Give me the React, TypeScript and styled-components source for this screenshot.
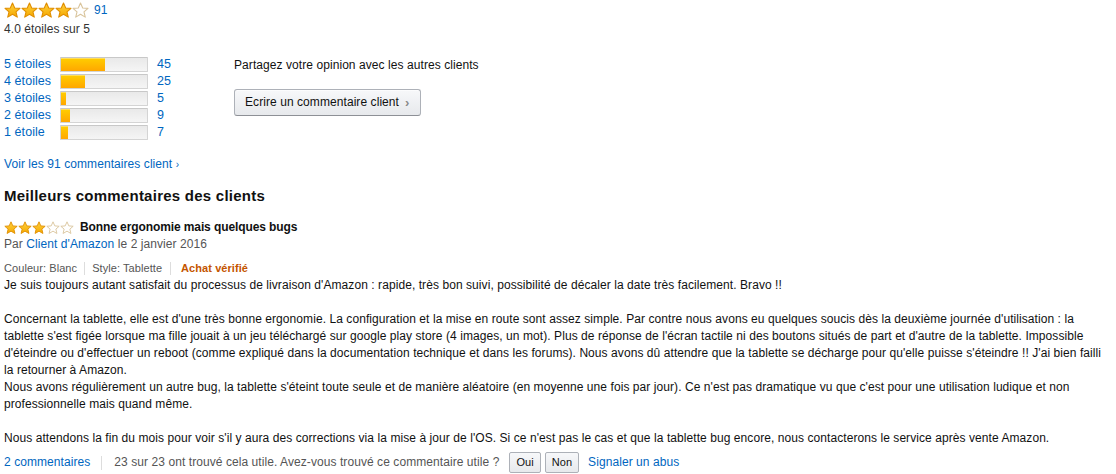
import styled, { createGlobalStyle } from "styled-components";

const GlobalStyle = createGlobalStyle`
  html, body {
    margin: 0;
    padding: 0;
    background: #fff;
  }
  body {
    font-family: "Liberation Sans", Arial, sans-serif;
    font-size: 12px;
    letter-spacing: 0.07px;
    color: #111;
  }
`;

const histogram = [
  { label: "5 étoiles", count: 45 },
  { label: "4 étoiles", count: 25 },
  { label: "3 étoiles", count: 5 },
  { label: "2 étoiles", count: 9 },
  { label: "1 étoile", count: 7 },
];
const total = 91;

const Star = ({ filled, size }: { filled: boolean; size: number }) => (
  <svg width={size} height={size} viewBox="0 0 20 20">
    <defs>
      <linearGradient id="starGold" x1="0" y1="0" x2="0" y2="1">
        <stop offset="0%" stopColor="#ffd23f" />
        <stop offset="100%" stopColor="#f5a800" />
      </linearGradient>
    </defs>
    <path
      d="M10 1.2 L12.6 7 L18.8 7.5 L14.1 11.6 L15.6 17.8 L10 14.5 L4.4 17.8 L5.9 11.6 L1.2 7.5 L7.4 7 Z"
      fill={filled ? "url(#starGold)" : "#fff"}
      stroke={filled ? "#e08e00" : "#d9c49c"}
      strokeWidth="1.3"
      strokeLinejoin="round"
    />
  </svg>
);

const Stars = ({ value, size }: { value: number; size: number }) => (
  <StarRow>
    {[1, 2, 3, 4, 5].map((i) => (
      <Star key={i} filled={i <= value} size={size} />
    ))}
  </StarRow>
);

const App = () => {
  return (
    <>
      <GlobalStyle />
      <Page>
        <Summary>
          <Stars value={4} size={17} />
          <Link>91</Link>
        </Summary>
        <AverageText>4.0 étoiles sur 5</AverageText>

        <RatingArea>
          <Histogram>
            {histogram.map((row) => (
              <HistRow key={row.label}>
                <Link>{row.label}</Link>
                <Bar>
                  <BarFill style={{ width: `${Math.round((row.count / total) * 88)}px` }} />
                </Bar>
                <Link>{row.count}</Link>
              </HistRow>
            ))}
          </Histogram>
          <WriteBox>
            <div>Partagez votre opinion avec les autres clients</div>
            <WriteButton>
              <span>Ecrire un commentaire client</span>
              <Chevron>›</Chevron>
            </WriteButton>
          </WriteBox>
        </RatingArea>

        <SeeAll>
          Voir les 91 commentaires client <SmallChevron>›</SmallChevron>
        </SeeAll>

        <SectionTitle>Meilleurs commentaires des clients</SectionTitle>

        <Review>
          <ReviewHeader>
            <Stars value={3} size={14} />
            <ReviewTitle>Bonne ergonomie mais quelques bugs</ReviewTitle>
          </ReviewHeader>
          <Byline>
            Par <Link>Client d'Amazon</Link> le 2 janvier 2016
          </Byline>
          <Meta>
            <MetaItem>Couleur: Blanc</MetaItem>
            <MetaItem>Style: Tablette</MetaItem>
            <Verified>Achat vérifié</Verified>
          </Meta>
          <Body>
            <p>
              Je suis toujours autant satisfait du processus de livraison d'Amazon : rapide, très bon suivi, possibilité
              de décaler la date très facilement. Bravo !!
            </p>
            <p>
              Concernant la tablette, elle est d'une très bonne ergonomie. La configuration et la mise en route sont assez
              simple. Par contre nous avons eu quelques soucis dès la deuxième journée d'utilisation : la tablette s'est
              figée lorsque ma fille jouait à un jeu téléchargé sur google play store (4 images, un mot). Plus de réponse
              de l'écran tactile ni des boutons situés de part et d'autre de la tablette. Impossible d'éteindre ou
              d'effectuer un reboot (comme expliqué dans la documentation technique et dans les forums). Nous avons dû
              attendre que la tablette se décharge pour qu'elle puisse s'éteindre !! J'ai bien failli la retourner à
              Amazon.
              <br />
              Nous avons régulièrement un autre bug, la tablette s'éteint toute seule et de manière aléatoire (en moyenne
              une fois par jour). Ce n'est pas dramatique vu que c'est pour une utilisation ludique et non
              professionnelle mais quand même.
            </p>
            <p>
              Nous attendons la fin du mois pour voir s'il y aura des corrections via la mise à jour de l'OS. Si ce n'est
              pas le cas et que la tablette bug encore, nous contacterons le service après vente Amazon.
            </p>
          </Body>
          <Footer>
            <Link>2 commentaires</Link>
            <Divider />
            <Helpful>23 sur 23 ont trouvé cela utile. Avez-vous trouvé ce commentaire utile ?</Helpful>
            <VoteButtons>
              <VoteButton>Oui</VoteButton>
              <VoteButton>Non</VoteButton>
            </VoteButtons>
            <Link>Signaler un abus</Link>
          </Footer>
        </Review>
      </Page>
    </>
  );
};

const Page = styled.div`
  padding: 2px 12px 0 4px;
  line-height: 17px;
`;
const StarRow = styled.span`
  display: inline-flex;
  align-items: center;
  svg {
    display: block;
  }
`;
const Summary = styled.div`
  display: flex;
  align-items: center;
  gap: 5px;
  height: 16px;
`;
const Link = styled.span`
  color: #0066c0;
`;
const AverageText = styled.div`
  margin-top: 3px;
  color: #333;
`;
const RatingArea = styled.div`
  display: flex;
  margin-top: 18px;
`;
const Histogram = styled.div`
  display: flex;
  flex-direction: column;
  width: 230px;
`;
const HistRow = styled.div`
  display: grid;
  grid-template-columns: 52px 88px auto;
  column-gap: 4px;
  align-items: center;
  height: 17px;
  font-size: 12.5px;
  & > span:last-child {
    padding-left: 5px;
  }
`;
const Bar = styled.div`
  height: 15px;
  box-sizing: border-box;
  border: 1px solid #d4d4d4;
  border-top-color: #c8c8c8;
  background: linear-gradient(to bottom, #e9e9e9, #f5f5f5);
  border-radius: 1px;
  overflow: hidden;
`;
const BarFill = styled.div`
  height: 100%;
  background: linear-gradient(to bottom, #ffce00, #ffa700);
  box-shadow: inset 0 1px 0 rgba(255, 255, 255, 0.35);
`;
const WriteBox = styled.div`
  display: flex;
  flex-direction: column;
  align-items: flex-start;
  gap: 15px;
  padding-top: 1px;
  color: #111;
`;
const WriteButton = styled.div`
  box-sizing: border-box;
  height: 27px;
  width: 187px;
  padding: 0 10px;
  display: flex;
  align-items: center;
  white-space: nowrap;
  border: 1px solid #adb1b8;
  border-bottom-color: #8d9096;
  border-radius: 3px;
  background: linear-gradient(to bottom, #f7f8fa, #e7e9ec);
  box-shadow: inset 0 1px 0 rgba(255, 255, 255, 0.6);
  color: #111;
`;
const Chevron = styled.span`
  color: #888;
  font-size: 13px;
  font-weight: bold;
  margin-left: 6px;
`;
const SeeAll = styled.div`
  margin-top: 15px;
  color: #0066c0;
`;
const SmallChevron = styled.span`
  font-size: 10px;
  color: #0066c0;
`;
const SectionTitle = styled.h2`
  margin: 13px 0 0;
  font-size: 15px;
  letter-spacing: 0.25px;
  font-weight: bold;
  line-height: 20px;
  color: #111;
`;
const Review = styled.div`
  margin-top: 13px;
`;
const ReviewHeader = styled.div`
  display: flex;
  align-items: center;
  gap: 6px;
  height: 17px;
`;
const ReviewTitle = styled.span`
  font-weight: bold;
  letter-spacing: -0.1px;
  color: #111;
`;
const Byline = styled.div`
  color: #555;
`;
const Meta = styled.div`
  display: flex;
  align-items: center;
  margin-top: 7px;
  font-size: 11px;
  color: #555;
`;
const MetaItem = styled.span`
  padding-right: 7px;
  margin-right: 7px;
  border-right: 1px solid #ddd;
  line-height: 13px;
  &:nth-child(2) {
    margin-right: 10px;
    padding-right: 8px;
  }
`;
const Verified = styled.span`
  color: #c45500;
  font-weight: bold;
`;
const Body = styled.div`
  margin-top: 0;
  color: #111;
  p {
    margin: 0 0 17px;
  }
  p:last-child {
    margin-bottom: 0;
  }
`;
const Footer = styled.div`
  display: flex;
  align-items: center;
  margin-top: 5px;
`;
const Divider = styled.span`
  width: 1px;
  height: 14px;
  background: #ddd;
  margin: 0 12px 0 11px;
`;
const Helpful = styled.span`
  color: #555;
`;
const VoteButtons = styled.span`
  display: flex;
  gap: 4px;
  margin: 0 9px 0 10px;
`;
const VoteButton = styled.span`
  box-sizing: border-box;
  height: 21px;
  padding: 0 6px;
  display: flex;
  align-items: center;
  font-size: 11px;
  color: #111;
  border: 1px solid #adb1b8;
  border-radius: 2px;
  background: linear-gradient(to bottom, #f7f8fa, #e7e9ec);
`;

export default App;
